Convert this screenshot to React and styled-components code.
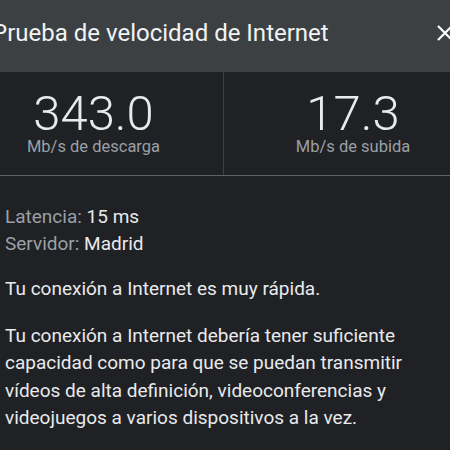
import React from 'react';
import styled, { createGlobalStyle } from 'styled-components';

const GlobalStyle = createGlobalStyle`
  html, body {
    margin: 0;
    padding: 0;
    width: 450px;
    height: 450px;
    overflow: hidden;
    background: #202124;
  }
  body {
    font-family: Roboto, "Noto Sans", Arial, sans-serif;
  }
`;

const Page = styled.div`
  width: 518px;
  height: 450px;
  margin-left: -36px;
  background: #202124;
  color: #e8eaed;
`;

const Header = styled.header`
  height: 72px;
  box-sizing: border-box;
  padding: 0 28px 7px 28px;
  display: flex;
  align-items: center;
  justify-content: space-between;
  background: #3c4043;
`;

const Title = styled.h1`
  margin: 0;
  font-size: 24px;
  font-weight: 400;
  color: #f1f3f4;
  line-height: 28px;
  white-space: nowrap;
`;

const CloseButton = styled.button`
  width: 18px;
  height: 18px;
  padding: 0;
  border: none;
  background: none;
  display: flex;
  color: #ffffff;
`;

const Stats = styled.section`
  display: grid;
  grid-template-columns: 259px 1fr;
  height: 103px;
  border-bottom: 1px solid #5f6368;
`;

const Stat = styled.div`
  display: flex;
  flex-direction: column;
  align-items: center;
  padding-top: 18px;
  border-left: ${p => (p.$divided ? '1px solid #3c4043' : 'none')};
`;

const Value = styled.div`
  font-size: 49px;
  font-weight: 300;
  line-height: 47px;
  color: #e8eaed;
`;

const Unit = styled.div`
  font-size: 16.5px;
  line-height: 20px;
  color: #9aa0a6;
`;

const Body = styled.section`
  padding: 27px 40px 0 41px;
  max-width: 420px;
  font-size: 19px;
`;

const InfoList = styled.div`
  line-height: 27px;
`;

const InfoRow = styled.div``;

const InfoLabel = styled.span`
  color: #9aa0a6;
`;

const InfoValue = styled.span`
  color: #e8eaed;
`;

const Text = styled.p`
  margin: ${p => p.$gap}px 0 0;
  line-height: 27.5px;
  color: #e8eaed;
`;

const stats = [
  { value: '343.0', unit: 'Mb/s de descarga' },
  { value: '17.3', unit: 'Mb/s de subida' },
];

export default function App() {
  return (
    <>
      <GlobalStyle />
      <Page>
        <Header>
          <Title>Prueba de velocidad de Internet</Title>
          <CloseButton aria-label="Cerrar">
            <svg width="18" height="18" viewBox="0 0 18 18">
              <path d="M2 2 L16 16 M16 2 L2 16" stroke="currentColor" strokeWidth="2.2" fill="none" />
            </svg>
          </CloseButton>
        </Header>
        <Stats>
          {stats.map((s, i) => (
            <Stat key={s.unit} $divided={i > 0}>
              <Value>{s.value}</Value>
              <Unit>{s.unit}</Unit>
            </Stat>
          ))}
        </Stats>
        <Body>
          <InfoList>
            <InfoRow>
              <InfoLabel>Latencia: </InfoLabel>
              <InfoValue>15 ms</InfoValue>
            </InfoRow>
            <InfoRow>
              <InfoLabel>Servidor: </InfoLabel>
              <InfoValue>Madrid</InfoValue>
            </InfoRow>
          </InfoList>
          <Text $gap={18}>Tu conexión a Internet es muy rápida.</Text>
          <Text $gap={19}>
            Tu conexión a Internet debería tener suficiente capacidad como para que se puedan
            transmitir vídeos de alta definición, videoconferencias y videojuegos a varios
            dispositivos a la vez.
          </Text>
        </Body>
      </Page>
    </>
  );
}
